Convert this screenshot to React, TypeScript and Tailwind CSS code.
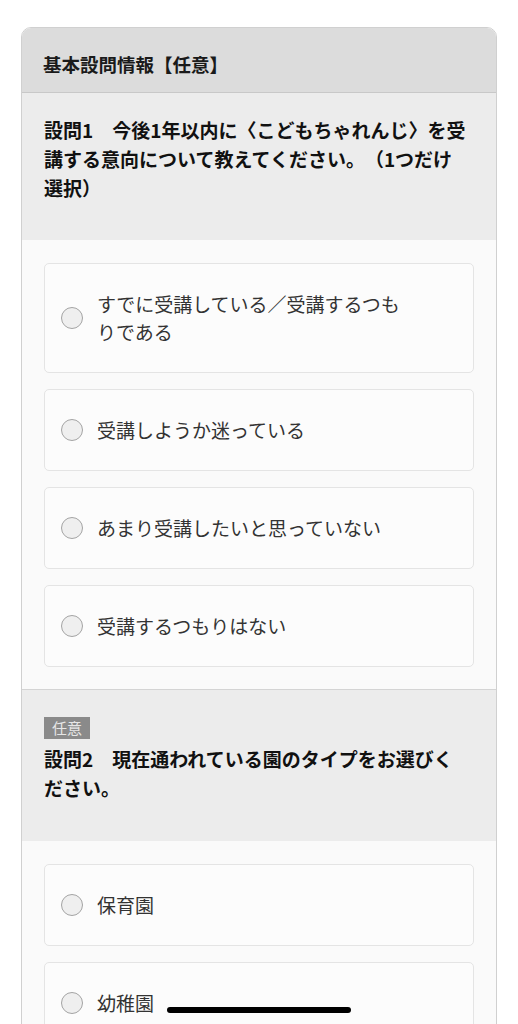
import React from 'react';

const Radio: React.FC = () => (
  <span className="w-[22px] h-[22px] rounded-full border border-[#a4a4a4] bg-[#efefef] shrink-0" />
);

const Option: React.FC<{ label: string }> = ({ label }) => (
  <label className="flex items-center gap-[14px] pl-[16px] pr-[66px] py-[26px] rounded-[5px] border border-[#e4e4e4] bg-[#fcfcfc]">
    <Radio />
    <span className="text-[19px] leading-[28px] text-[#333]">{label}</span>
  </label>
);

const OptionList: React.FC<{ options: string[] }> = ({ options }) => (
  <div className="bg-[#fafafa] px-[22px] pt-[23px] pb-[22px] flex flex-col gap-[16px]">
    {options.map((o) => (
      <Option key={o} label={o} />
    ))}
  </div>
);

const Q1_OPTIONS = [
  'すでに受講している／受講するつもりである',
  '受講しようか迷っている',
  'あまり受講したいと思っていない',
  '受講するつもりはない',
];

const Q2_OPTIONS = ['保育園', '幼稚園', 'その他'];

export default function App() {
  return (
    <div
      className="min-h-screen bg-white pt-[27px] px-[21px] pb-10 [text-spacing-trim:space-all]"
      style={{ fontFamily: '"Noto Sans CJK JP", "Noto Sans", sans-serif' }}
    >
      <div className="rounded-t-[10px] border border-[#d0d0d0] overflow-hidden">
        <div className="bg-[#dcdcdc] pl-[21px] pt-[23px] pb-[15px] border-b border-[#c8c8c8]">
          <h2 className="text-[18.5px] leading-[26px] font-bold text-[#1a1a1a]">基本設問情報【任意】</h2>
        </div>

        <div className="bg-[#ececec] pl-[22px] pr-[28px] pt-[22px] pb-[38px]">
          <p className="text-[19px] leading-[29px] font-bold text-[#111]">
            設問1　今後1年以内に〈こどもちゃれんじ〉を受講する意向について教えてください。（1つだけ選択）
          </p>
        </div>
        <OptionList options={Q1_OPTIONS} />

        <div className="bg-[#ececec] border-t border-[#d4d4d4] pl-[22px] pr-[28px] pt-[25px] pb-[39px]">
          <span className="inline-block bg-[#8a8a8a] text-[#e6e6e6] text-[15px] leading-[22px] px-[8px]">任意</span>
          <p className="mt-[5px] text-[19px] leading-[29px] font-bold text-[#111]">
            設問2　現在通われている園のタイプをお選びください。
          </p>
        </div>
        <OptionList options={Q2_OPTIONS} />
      </div>

      <div className="fixed bottom-[11px] left-1/2 -translate-x-1/2 w-[184px] h-[6px] rounded-full bg-black" />
    </div>
  );
}
